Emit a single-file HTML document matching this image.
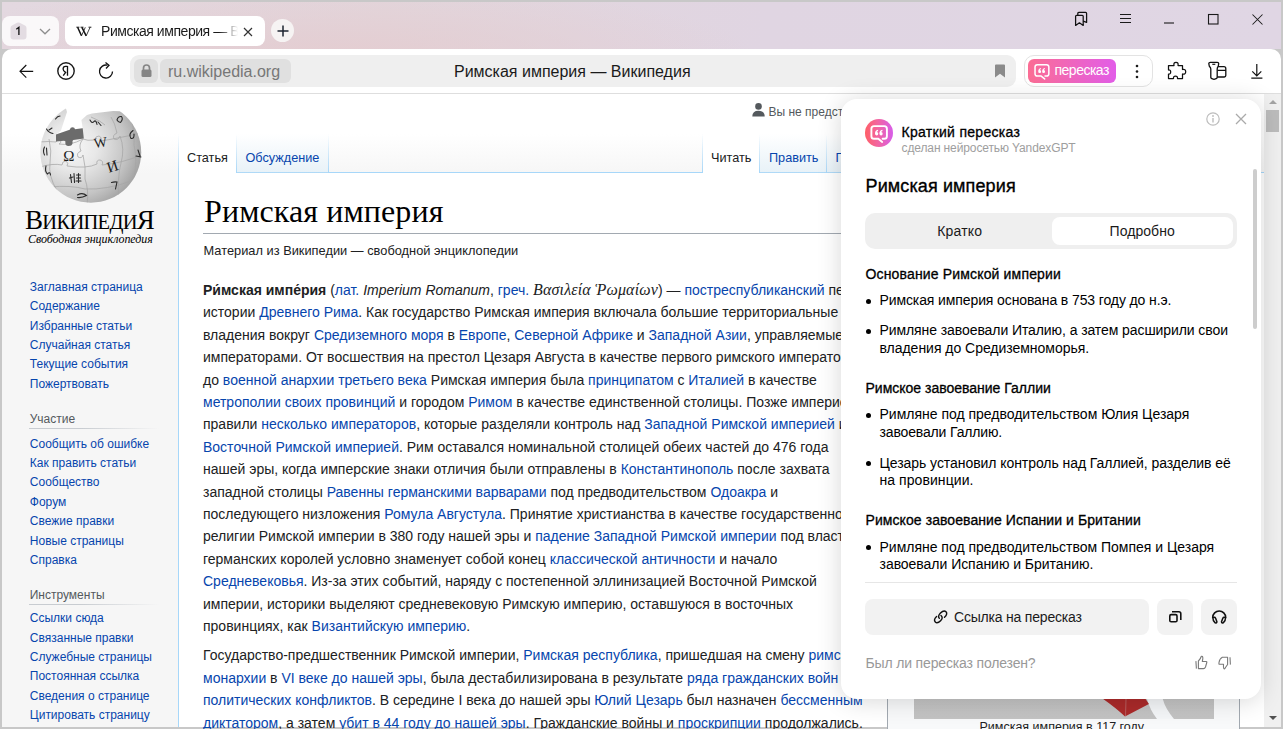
<!DOCTYPE html>
<html><head><meta charset="utf-8">
<style>
*{box-sizing:border-box;margin:0;padding:0}
html,body{width:1283px;height:729px;overflow:hidden}
body{background:#c8c8c8;font-family:"Liberation Sans",sans-serif;position:relative}
.a{position:absolute}
#tabbar{left:2px;top:2px;width:1279px;height:47px;background:radial-gradient(ellipse 420px 70px at 330px 52px,rgba(228,204,208,.9),rgba(228,204,208,0)),linear-gradient(90deg,#e3d8e0 0%,#e2d6dc 30%,#e0d5e2 60%,#e0d6e4 100%)}
#toolbar{left:2px;top:49px;width:1279px;height:45px;background:#fff;border-radius:10px 10px 0 0;border-bottom:1px solid #dedede}
#page{left:2px;top:94px;width:1262px;height:632px;background:#f6f6f6;overflow:hidden}
#vscroll{left:1264px;top:94px;width:16px;height:632px;background:#f0f0f0}
.ic{position:absolute;overflow:visible}

.t{position:absolute;white-space:nowrap}
a{color:#0645ad;text-decoration:none}
</style></head><body>
<!-- TAB BAR -->
<div id="tabbar" class="a"></div>
<div class="a" style="left:2px;top:16px;width:57px;height:30px;background:rgba(255,255,255,.82);border-radius:8px"></div>
<svg class="ic" style="left:9.5px;top:22px" width="17" height="18" viewBox="0 0 17 18"><path d="M7 0.8Q8.3 0.2 9.6 0.8L15 3.6Q16.5 4.4 16.5 6V14.5Q16.5 17.5 13.5 17.5H3.5Q0.5 17.5 0.5 14.5V6Q0.5 4.4 2 3.6Z" fill="#e3dce2"/><path d="M6.3 7.2L8.9 5.3V13" fill="none" stroke="#111" stroke-width="1.3"/></svg>
<svg class="ic" style="left:38.5px;top:28px" width="12" height="7" viewBox="0 0 12 7"><path d="M1 1L6 5.8L11 1" fill="none" stroke="#8e8e8e" stroke-width="1.3"/></svg>
<div class="a" style="left:65px;top:16px;width:200px;height:30px;background:#fff;border-radius:8px"></div>
<svg class="ic" style="left:76px;top:26px" width="16" height="11" viewBox="0 0 16 11"><path d="M1.6 1.3L5.5 9.8M5.9 1.3L10.2 9.8" stroke="#111" stroke-width="1.5"/><path d="M5.5 9.8L9.3 1.3M10.2 9.8L14.1 1.3" stroke="#111" stroke-width="0.8"/><path d="M0.3 1.2H3.4M4.5 1.2H7.5M12.5 1.2H15.4" stroke="#111" stroke-width="0.9"/></svg>
<div class="a" style="left:101px;top:22px;width:137px;overflow:hidden;white-space:nowrap;font-size:14px;line-height:18px;color:#1a1a1a;letter-spacing:-0.45px;-webkit-mask-image:linear-gradient(90deg,#000 86%,transparent 100%)">Римская империя — Википедия</div>
<svg class="ic" style="left:243px;top:27px" width="10" height="10" viewBox="0 0 10 10"><path d="M1 1L9 9M9 1L1 9" stroke="#333" stroke-width="1.2"/></svg>
<div class="a" style="left:271px;top:19px;width:23px;height:23px;border-radius:50%;background:#f6f3f3"></div>
<svg class="ic" style="left:276.5px;top:24.5px" width="12" height="12" viewBox="0 0 12 12"><path d="M6 0.5V11.5M0.5 6H11.5" stroke="#1d2430" stroke-width="1.5"/></svg>

<!-- window controls -->
<svg class="ic" style="left:1074px;top:11px" width="14" height="16" viewBox="0 0 14 16"><path d="M1.6 14.4V5.3Q1.6 4.3 2.6 4.3H8.2Q9.2 4.3 9.2 5.3V14.4L5.4 11.8Z" fill="none" stroke="#111" stroke-width="1.25" stroke-linejoin="round"/><path d="M3.8 4.3V2.4Q3.8 1.4 4.8 1.4H11.6Q12.6 1.4 12.6 2.4V11.4L9.2 10.2" fill="none" stroke="#111" stroke-width="1.25" stroke-linejoin="round"/></svg>
<svg class="ic" style="left:1120px;top:14px" width="11" height="10" viewBox="0 0 11 10"><path d="M0 0.5H11M0 4.5H11M0 8.5H11" stroke="#1a1a1a" stroke-width="1.1"/></svg>
<svg class="ic" style="left:1164px;top:22px" width="10" height="2" viewBox="0 0 10 2"><path d="M0 1H10" stroke="#1a1a1a" stroke-width="1.1"/></svg>
<svg class="ic" style="left:1208px;top:14px" width="11" height="11" viewBox="0 0 11 11"><rect x="0.5" y="0.5" width="9.5" height="9.5" fill="none" stroke="#1a1a1a" stroke-width="1.1"/></svg>
<svg class="ic" style="left:1252px;top:14px" width="11" height="11" viewBox="0 0 11 11"><path d="M0.5 0.5L10.5 10.5M10.5 0.5L0.5 10.5" stroke="#1a1a1a" stroke-width="1.05"/></svg>

<!-- TOOLBAR -->
<div id="toolbar" class="a"></div>
<svg class="ic" style="left:19px;top:64px" width="15" height="15" viewBox="0 0 15 15"><path d="M14.2 7.3H1.2M7.3 1L1 7.3L7.3 13.6" fill="none" stroke="#111" stroke-width="1.15"/></svg>
<svg class="ic" style="left:57px;top:62px" width="18" height="18" viewBox="0 0 18 18"><circle cx="9" cy="9" r="8.2" fill="none" stroke="#1a1a1a" stroke-width="1.4"/><path d="M10.5 4.1V13.8M10.5 4.3H8.5Q6.1 4.3 6.1 7Q6.1 9 8.6 10.4L6.2 13.6" fill="none" stroke="#111" stroke-width="1.3"/></svg>
<svg class="ic" style="left:97px;top:62px" width="18" height="18" viewBox="0 0 18 18"><path d="M15.5 9.5A6.5 6.5 0 1 1 10.5 3.2" fill="none" stroke="#111" stroke-width="1.3"/><path d="M8.5 0.5L12 3.3L9 6.5" fill="none" stroke="#111" stroke-width="1.3"/></svg>

<div class="a" style="left:130px;top:55px;width:886px;height:32px;background:#efefef;border-radius:9px"></div>
<div class="a" style="left:134px;top:59px;width:24px;height:24px;background:#e0e0e0;border-radius:6px"></div>
<svg class="ic" style="left:141px;top:64px" width="11" height="13" viewBox="0 0 11 13"><path d="M2.5 6V4A3 3 0 0 1 8.5 4V6" fill="none" stroke="#858585" stroke-width="1.7"/><rect x="0.5" y="5.5" width="10" height="7.5" rx="1.5" fill="#858585"/></svg>
<div class="a" style="left:160px;top:59px;width:131px;height:24px;background:#e0e0e0;border-radius:6px"></div>
<div class="a" style="left:168px;top:62px;font-size:16px;line-height:20px;color:#777">ru.wikipedia.org</div>
<div class="a" style="left:454px;top:62px;font-size:16px;line-height:20px;color:#1a1a1a">Римская империя — Википедия</div>
<svg class="ic" style="left:994px;top:64px" width="12" height="14" viewBox="0 0 12 14"><path d="M1 1.5Q1 0.5 2 0.5H10Q11 0.5 11 1.5V13.5L6 9.8L1 13.5Z" fill="#8a8a8a"/></svg>

<div class="a" style="left:1024px;top:55px;width:129px;height:32px;border:1px solid #e3e3e3;border-radius:10px"></div>
<div class="a" style="left:1028px;top:59px;width:88px;height:24px;border-radius:6px;background:linear-gradient(90deg,#fb6d94,#e25de8)"></div>
<svg class="ic" style="left:1032px;top:62.3px" width="19.6" height="19.6" viewBox="0 0 22 22"><path d="M10.3 15.8H6Q3.4 15.8 3.4 13.2V5.7Q3.4 3.1 6 3.1H16.3Q18.9 3.1 18.9 5.7V13.2Q18.9 15.8 16.3 15.8H14.6M10.3 15.8L14.2 19" fill="none" stroke="#fff" stroke-width="1.7" stroke-linecap="round" stroke-linejoin="round"/><path d="M7 10.6Q6.9 7.6 9.9 6.8L10.2 7.9Q8.9 8.4 8.7 9.1A1.65 1.65 0 1 1 7 10.6ZM11.4 10.6Q11.3 7.6 14.3 6.8L14.6 7.9Q13.3 8.4 13.1 9.1A1.65 1.65 0 1 1 11.4 10.6Z" fill="#fff"/></svg>
<div class="a" style="left:1054.5px;top:62px;font-size:14px;line-height:16px;color:#fff;letter-spacing:-0.5px">пересказ</div>
<svg class="ic" style="left:1135px;top:64px" width="4" height="15" viewBox="0 0 4 15"><circle cx="2" cy="2" r="1.3" fill="#1a1a1a"/><circle cx="2" cy="7.5" r="1.3" fill="#1a1a1a"/><circle cx="2" cy="13" r="1.3" fill="#1a1a1a"/></svg>
<svg class="ic" style="left:1167px;top:61px" width="20" height="19" viewBox="0 0 20 19"><path d="M1.5 4.5H7Q6.3 1.3 9 1.3Q11.7 1.3 11 4.5H15.5V8.5Q18.7 8 18.7 10.75Q18.7 13.5 15.5 13V17.5H10.5Q10.7 15 8.5 15Q6.3 15 6.5 17.5H1.5V13Q3.7 13.2 3.7 11Q3.7 8.8 1.5 9Z" fill="none" stroke="#111" stroke-width="1.25" stroke-linejoin="round"/></svg>
<svg class="ic" style="left:1207px;top:61px" width="20" height="20" viewBox="0 0 20 20"><path d="M1.8 2.6Q1.8 1.3 3.3 1.3H10.2Q11.7 1.3 11.7 2.6L11.3 5.2Q10.2 6.6 10.2 8V16.6Q10.2 17.8 7 18.3Q3.8 17.8 3.8 16.6V8Q3.8 6.6 2.3 5.2Z" fill="none" stroke="#111" stroke-width="1.3" stroke-linejoin="round"/><path d="M5.3 3.3H8.3" stroke="#111" stroke-width="1.2"/><path d="M11 5.6H16.9Q18.8 5.6 18.8 7.6V14.6Q18.8 16 17.3 16H10.2M10.5 9.3H18.8" fill="none" stroke="#111" stroke-width="1.3"/></svg>
<svg class="ic" style="left:1251px;top:63px" width="12" height="17" viewBox="0 0 12 17"><path d="M5.8 1V12.8M1.3 8.3L5.8 12.8L10.3 8.3M0.3 15.2H11.4" fill="none" stroke="#111" stroke-width="1.2"/></svg>

<div class="a" style="left:2px;top:94px;width:1262px;height:633px;background:#f6f6f6"></div>
<div class="a" style="left:2px;top:94px;width:1262px;height:80px;background:linear-gradient(#fff 50%,#f6f6f6 100%)"></div>
<div class="a" style="left:178px;top:172px;width:1086px;height:555px;background:#fff;border-left:1px solid #a7d7f9;border-top:1px solid #a7d7f9"></div>
<div class="a" style="left:179px;top:134px;width:57px;height:39px;background:#fff"></div>
<div class="a" style="left:237px;top:134px;width:91px;height:39px;background:linear-gradient(to top,#77c1f6 0,#e8f2f8 1px,#fff 100%)"></div>
<div class="a" style="left:703px;top:134px;width:56px;height:39px;background:#fff"></div>
<div class="a" style="left:760px;top:134px;width:66px;height:39px;background:linear-gradient(to top,#77c1f6 0,#e8f2f8 1px,#fff 100%)"></div>
<div class="a" style="left:827px;top:134px;width:93px;height:39px;background:linear-gradient(to top,#77c1f6 0,#e8f2f8 1px,#fff 100%)"></div>
<div class="a" style="left:178px;top:134px;width:1px;height:39px;background:linear-gradient(rgba(167,215,249,0),#a7d7f9)"></div>
<div class="a" style="left:236px;top:134px;width:1px;height:39px;background:linear-gradient(rgba(167,215,249,0),#a7d7f9)"></div>
<div class="a" style="left:328px;top:134px;width:1px;height:39px;background:linear-gradient(rgba(167,215,249,0),#a7d7f9)"></div>
<div class="a" style="left:702px;top:134px;width:1px;height:39px;background:linear-gradient(rgba(167,215,249,0),#a7d7f9)"></div>
<div class="a" style="left:759px;top:134px;width:1px;height:39px;background:linear-gradient(rgba(167,215,249,0),#a7d7f9)"></div>
<div class="a" style="left:826px;top:134px;width:1px;height:39px;background:linear-gradient(rgba(167,215,249,0),#a7d7f9)"></div>
<div class="a" style="left:920px;top:134px;width:1px;height:39px;background:linear-gradient(rgba(167,215,249,0),#a7d7f9)"></div>
<div class="t " style="left:187px;top:151px;font-size:12.7px;line-height:14px;color:#202122;">Статья</div>
<div class="t " style="left:245.5px;top:151px;font-size:12.7px;line-height:14px;color:#202122;"><a>Обсуждение</a></div>
<div class="t " style="left:711px;top:151px;font-size:12.7px;line-height:14px;color:#202122;">Читать</div>
<div class="t " style="left:769px;top:151px;font-size:12.7px;line-height:14px;color:#202122;"><a>Править</a></div>
<div class="t " style="left:835.5px;top:151px;font-size:12.7px;line-height:14px;color:#202122;"><a>Править код</a></div>
<svg class="ic" style="left:752px;top:103px" width="13" height="14" viewBox="0 0 13 14"><circle cx="6.5" cy="3.4" r="3.3" fill="#54595d"/><path d="M0.3 13.5Q0.3 7.8 6.5 7.8Q12.7 7.8 12.7 13.5Z" fill="#54595d"/></svg>
<div class="t " style="left:768.5px;top:105px;font-size:12px;line-height:14px;color:#54595d;">Вы не представились</div>
<div class="t " style="left:204px;top:193px;font-size:32px;line-height:36px;color:#000;font-family:'Liberation Serif',serif;letter-spacing:0.106px;">Римская империя</div>
<div class="a" style="left:203px;top:233px;width:1040px;height:1px;background:#a2a9b1"></div>
<div class="t " style="left:203.5px;top:243px;font-size:12.8px;line-height:15px;color:#202122;letter-spacing:0.015px;">Материал из Википедии — свободной энциклопедии</div>
<div class="t " style="left:203px;top:282px;font-size:14px;line-height:16px;color:#202122;"><b>Ри́мская импе́рия</b> (<a>лат.</a> <i>Imperium Romanum</i>, <a>греч.</a> <i style="font-family:'Liberation Serif',serif;font-size:16px;letter-spacing:0.15px">Βασιλεία Ῥωμαίων</i>) — <a>постреспубликанский</a> период</div>
<div class="t " style="left:203px;top:304px;font-size:14px;line-height:16px;color:#202122;">истории <a>Древнего Рима</a>. Как государство Римская империя включала большие территориальные</div>
<div class="t " style="left:203px;top:327px;font-size:14px;line-height:16px;color:#202122;">владения вокруг <a>Средиземного моря</a> в <a>Европе</a>, <a>Северной Африке</a> и <a>Западной Азии</a>, управляемые</div>
<div class="t " style="left:203px;top:349px;font-size:14px;line-height:16px;color:#202122;">императорами. От восшествия на престол Цезаря Августа в качестве первого римского императора</div>
<div class="t " style="left:203px;top:372px;font-size:14px;line-height:16px;color:#202122;">до <a>военной анархии третьего века</a> Римская империя была <a>принципатом</a> с <a>Италией</a> в качестве</div>
<div class="t " style="left:203px;top:394px;font-size:14px;line-height:16px;color:#202122;"><a>метрополии своих провинций</a> и городом <a>Римом</a> в качестве единственной столицы. Позже империей</div>
<div class="t " style="left:203px;top:416px;font-size:14px;line-height:16px;color:#202122;">правили <a>несколько императоров</a>, которые разделяли контроль над <a>Западной Римской империей</a> и</div>
<div class="t " style="left:203px;top:439px;font-size:14px;line-height:16px;color:#202122;"><a>Восточной Римской империей</a>. Рим оставался номинальной столицей обеих частей до 476 года</div>
<div class="t " style="left:203px;top:461px;font-size:14px;line-height:16px;color:#202122;">нашей эры, когда имперские знаки отличия были отправлены в <a>Константинополь</a> после захвата</div>
<div class="t " style="left:203px;top:484px;font-size:14px;line-height:16px;color:#202122;">западной столицы <a>Равенны</a> <a>германскими варварами</a> под предводительством <a>Одоакра</a> и</div>
<div class="t " style="left:203px;top:506px;font-size:14px;line-height:16px;color:#202122;">последующего низложения <a>Ромула Августула</a>. Принятие христианства в качестве государственной</div>
<div class="t " style="left:203px;top:528px;font-size:14px;line-height:16px;color:#202122;">религии Римской империи в 380 году нашей эры и <a>падение Западной Римской империи</a> под властью</div>
<div class="t " style="left:203px;top:551px;font-size:14px;line-height:16px;color:#202122;">германских королей условно знаменует собой конец <a>классической античности</a> и начало</div>
<div class="t " style="left:203px;top:573px;font-size:14px;line-height:16px;color:#202122;"><a>Средневековья</a>. Из-за этих событий, наряду с постепенной эллинизацией Восточной Римской</div>
<div class="t " style="left:203px;top:596px;font-size:14px;line-height:16px;color:#202122;">империи, историки выделяют средневековую Римскую империю, оставшуюся в восточных</div>
<div class="t " style="left:203px;top:618px;font-size:14px;line-height:16px;color:#202122;">провинциях, как <a>Византийскую империю</a>.</div>
<div class="t " style="left:203px;top:647px;font-size:14px;line-height:16px;color:#202122;">Государство-предшественник Римской империи, <a>Римская республика</a>, пришедшая на смену <a>римской</a></div>
<div class="t " style="left:203px;top:670px;font-size:14px;line-height:16px;color:#202122;"><a>монархии</a> в <a>VI веке до нашей эры</a>, была дестабилизирована в результате <a>ряда гражданских войн</a> и</div>
<div class="t " style="left:203px;top:692px;font-size:14px;line-height:16px;color:#202122;"><a>политических конфликтов</a>. В середине I века до нашей эры <a>Юлий Цезарь</a> был назначен <a>бессменным</a></div>
<div class="t " style="left:203px;top:715px;font-size:14px;line-height:16px;color:#202122;"><a>диктатором</a>, а затем <a>убит в 44 году до нашей эры</a>. Гражданские войны и <a>проскрипции</a> продолжались.</div>
<div class="a" style="left:887px;top:300px;width:353px;height:430px;background:#f8f9fa;border:1px solid #a2a9b1"></div>
<div class="a" style="left:914px;top:300px;width:300px;height:419px;background:linear-gradient(#b9b9b9,#c3c3c3)"></div>
<svg class="ic" style="left:1090px;top:690px" width="124" height="29" viewBox="0 0 124 29"><path d="M57 9L72.8 9Q75 18 84 29L67 29Q60 20 57 9Z" fill="#f4f6f8"/><path d="M13.2 9L55.6 9L58.9 13.9L35 26.5Q26 18 13.2 9Z" fill="#ab2a2a"/><path d="M36 9L35.5 26" stroke="#c08080" stroke-width="0.6"/></svg>
<div class="t " style="left:979.5px;top:720px;font-size:12.5px;line-height:14px;color:#202122;">Римская империя в 117 году</div>
<div class="t " style="left:29.8px;top:280px;font-size:12px;line-height:14px;color:#202122;"><a>Заглавная страница</a></div>
<div class="t " style="left:29.8px;top:299px;font-size:12px;line-height:14px;color:#202122;"><a>Содержание</a></div>
<div class="t " style="left:29.8px;top:319px;font-size:12px;line-height:14px;color:#202122;"><a>Избранные статьи</a></div>
<div class="t " style="left:29.8px;top:338px;font-size:12px;line-height:14px;color:#202122;"><a>Случайная статья</a></div>
<div class="t " style="left:29.8px;top:357px;font-size:12px;line-height:14px;color:#202122;"><a>Текущие события</a></div>
<div class="t " style="left:29.8px;top:377px;font-size:12px;line-height:14px;color:#202122;"><a>Пожертвовать</a></div>
<div class="t " style="left:29.8px;top:437px;font-size:12px;line-height:14px;color:#202122;"><a>Сообщить об ошибке</a></div>
<div class="t " style="left:29.8px;top:456px;font-size:12px;line-height:14px;color:#202122;"><a>Как править статьи</a></div>
<div class="t " style="left:29.8px;top:475px;font-size:12px;line-height:14px;color:#202122;"><a>Сообщество</a></div>
<div class="t " style="left:29.8px;top:495px;font-size:12px;line-height:14px;color:#202122;"><a>Форум</a></div>
<div class="t " style="left:29.8px;top:514px;font-size:12px;line-height:14px;color:#202122;"><a>Свежие правки</a></div>
<div class="t " style="left:29.8px;top:534px;font-size:12px;line-height:14px;color:#202122;"><a>Новые страницы</a></div>
<div class="t " style="left:29.8px;top:553px;font-size:12px;line-height:14px;color:#202122;"><a>Справка</a></div>
<div class="t " style="left:29.8px;top:611px;font-size:12px;line-height:14px;color:#202122;"><a>Ссылки сюда</a></div>
<div class="t " style="left:29.8px;top:631px;font-size:12px;line-height:14px;color:#202122;"><a>Связанные правки</a></div>
<div class="t " style="left:29.8px;top:650px;font-size:12px;line-height:14px;color:#202122;"><a>Служебные страницы</a></div>
<div class="t " style="left:29.8px;top:669px;font-size:12px;line-height:14px;color:#202122;"><a>Постоянная ссылка</a></div>
<div class="t " style="left:29.8px;top:689px;font-size:12px;line-height:14px;color:#202122;"><a>Сведения о странице</a></div>
<div class="t " style="left:29.8px;top:708px;font-size:12px;line-height:14px;color:#202122;"><a>Цитировать страницу</a></div>
<div class="t " style="left:29.7px;top:412px;font-size:12px;line-height:14px;color:#54595d;">Участие</div>
<div class="a" style="left:29px;top:428px;width:130px;height:1px;background:linear-gradient(90deg,#c8ccd1 0%,#c8ccd1 40%,rgba(200,204,209,0) 100%)"></div>
<div class="t " style="left:29.7px;top:588px;font-size:12px;line-height:14px;color:#54595d;">Инструменты</div>
<div class="a" style="left:29px;top:604px;width:130px;height:1px;background:linear-gradient(90deg,#c8ccd1 0%,#c8ccd1 40%,rgba(200,204,209,0) 100%)"></div>
<div class="t" style="left:25px;top:207px;font-family:'Liberation Serif',serif;color:#000;line-height:26px;font-size:27px;letter-spacing:-0.7px">В<span style="font-size:20.5px">ИКИПЕДИ</span>Я</div>
<div class="t " style="left:28px;top:232px;font-size:12px;line-height:14px;color:#000;font-family:'Liberation Serif',serif;font-style:italic;letter-spacing:-0.076px;">Свободная энциклопедия</div>
<svg class="ic" style="left:35px;top:105px" width="110" height="103" viewBox="0 0 110 103">
<defs>
<radialGradient id="gg" cx="0.34" cy="0.40" r="0.75">
<stop offset="0" stop-color="#f7f7f7"/>
<stop offset="0.3" stop-color="#e8e8e8"/>
<stop offset="0.65" stop-color="#c4c4c4"/>
<stop offset="0.9" stop-color="#9c9c9c"/>
<stop offset="1" stop-color="#8a8a8a"/>
</radialGradient>
<clipPath id="gc"><circle cx="55.8" cy="47.3" r="50.4"/></clipPath>
<clipPath id="gp"><path d="M0 103L0 0L30 0L32 7L25.8 26L21 29.5L34.7 24.7L47.7 23.3L46.4 15L52 10L57 8.5L78 6L92 6.5L110 8L110 103Z"/></clipPath>
</defs>
<g clip-path="url(#gp)"><g clip-path="url(#gc)">
<rect x="0" y="0" width="110" height="103" fill="url(#gg)"/>
<g fill="none" stroke="#a6a6a6" stroke-width="0.75">
<path d="M4 37Q14 36 21 37Q22 33 25 34Q27 38 24 39Q35 41 48 34Q52 36 60 35Q60 31 64 31Q68 33 65 36Q80 34 106 28"/>
<path d="M5 62Q18 58 27 60Q27 56 31 56Q34 58 32 61Q52 64 62 59Q61 55 65 55Q69 56 67 60Q88 58 106 50"/>
<path d="M48 34Q43 40 46 46Q41 48 43 52Q47 54 48 50Q51 62 50 74Q54 85 52 100"/>
<path d="M76 12Q80 18 82 28Q77 30 79 34Q83 36 85 31Q90 44 86 58Q82 72 84 100"/>
<path d="M96 14Q100 25 99 40Q103 55 98 80"/>
<path d="M14 34Q17 46 15 58Q13 70 22 86"/>
<path d="M14 82Q36 80 50 84Q72 85 96 76"/>
<path d="M56 12Q66 16 70 20"/>
</g>
</g></g>
<path d="M21 29.5L34.7 24.7Q35.5 22.3 37.5 22.3Q39.8 22.5 40 24.2L47.7 23.3L48.8 33.6L38.3 34.9Q37 35.5 37.6 37.5Q37.5 41 33.5 41Q30 40.8 30.4 37.8Q31 36 29 35.8L21 36.4Z" fill="#6b6b6b"/>
<g font-family="'Liberation Serif',serif" fill="#1e1e1e">
<text x="28.3" y="55.8" font-size="15">Ω</text>
<text x="58.8" y="42.3" font-size="14" transform="rotate(-8 65 38)">W</text>
<text x="71.5" y="66.5" font-size="15.5" transform="rotate(-18 77 60)">И</text>
</g>
<g fill="none" stroke="#2a2a2a" stroke-width="1.1" stroke-linecap="round">
<path d="M35.5 69.5L36.5 77.5M39 68.5L39.5 77.5M41.5 70L45.5 70M41.5 73L45.5 73M41 76L46 76M43.5 68.5L43.5 77.5M34.5 73L38 72"/>
<path d="M76.5 77.5Q79.5 76.5 82 77L80.5 84"/>
<path d="M55 15Q57 19 59 16.5Q61 14.5 62 19.5M63 17L66 20.5"/>
<path d="M82 15Q83 11 86.5 11.5Q88.5 14 85.5 17.5Q83 17 82 15Z"/>
<path d="M98 25.5Q93 29 96 33.5Q99.5 34 99 29"/>
<path d="M103 45L105 51M101 51L106 52"/>
<path d="M9.5 42Q7.5 46 9.5 50M11.5 43L12 50"/>
<path d="M11 61Q9.5 66 12.5 69Q15 66 15.5 70"/>
<path d="M42.5 90Q47.5 87 51.5 90.5Q47 93 42.5 92.5"/>
<path d="M11.5 24Q14 28 18 28.5M14 25L17 23"/>
<path d="M20.5 14Q22.5 11 25 11"/>
</g>
</svg>
<div class="a" style="left:1264px;top:94px;width:17px;height:633px;background:#f0f0f0"></div>
<div class="a" style="left:1266px;top:110px;width:13px;height:22px;background:#bcbcbc"></div>
<svg class="ic" style="left:1268.5px;top:100px" width="8" height="4" viewBox="0 0 8 4"><path d="M0 4L4 0L8 4Z" fill="#a3a3a3"/></svg>
<svg class="ic" style="left:1269px;top:716px" width="8" height="4" viewBox="0 0 8 4"><path d="M0 0L4 4L8 0Z" fill="#505050"/></svg>
<div class="a" style="left:841px;top:99px;width:420px;height:599.5px;background:#fff;border-radius:16px;box-shadow:0 2px 24px rgba(0,0,0,.16)"></div>
<div class="a" style="left:865px;top:119px;width:28px;height:28px;border-radius:50%;background:linear-gradient(90deg,#ff5f66 0%,#f265a0 45%,#d75de9 100%)"></div>
<svg class="ic" style="left:868px;top:123px" width="22" height="22" viewBox="0 0 22 22"><path d="M10.3 15.8H6Q3.4 15.8 3.4 13.2V5.7Q3.4 3.1 6 3.1H16.3Q18.9 3.1 18.9 5.7V13.2Q18.9 15.8 16.3 15.8H14.6M10.3 15.8L14.2 19" fill="none" stroke="#fff" stroke-width="1.9" stroke-linecap="round" stroke-linejoin="round"/><path d="M7 10.6Q6.9 7.6 9.9 6.8L10.2 7.9Q8.9 8.4 8.7 9.1A1.65 1.65 0 1 1 7 10.6ZM11.4 10.6Q11.3 7.6 14.3 6.8L14.6 7.9Q13.3 8.4 13.1 9.1A1.65 1.65 0 1 1 11.4 10.6Z" fill="#fff"/></svg>
<div class="t " style="left:901.5px;top:124px;font-size:14px;line-height:16px;color:#000;letter-spacing:0.299px;-webkit-text-stroke:0.3px #000;">Краткий пересказ</div>
<div class="t " style="left:901.5px;top:141px;font-size:12px;line-height:14px;color:#9e9e9e;letter-spacing:-0.115px;">сделан нейросетью YandexGPT</div>
<svg class="ic" style="left:1206px;top:112px" width="14" height="14" viewBox="0 0 14 14"><circle cx="7" cy="7" r="6.2" fill="none" stroke="#bdbdbd" stroke-width="1.2"/><circle cx="7" cy="4" r="0.9" fill="#bdbdbd"/><path d="M7 6V10.5" stroke="#bdbdbd" stroke-width="1.4"/></svg>
<svg class="ic" style="left:1235px;top:113px" width="12" height="12" viewBox="0 0 12 12"><path d="M1 1L11 11M11 1L1 11" stroke="#aaa" stroke-width="1.3"/></svg>
<div class="t " style="left:865.5px;top:176px;font-size:18px;line-height:20px;color:#000;letter-spacing:0.122px;-webkit-text-stroke:0.35px #000;">Римская империя</div>
<div class="a" style="left:865px;top:213px;width:372px;height:36px;background:#efefef;border-radius:10px"></div>
<div class="a" style="left:1052px;top:217px;width:181px;height:28px;background:#fff;border-radius:8px"></div>
<div class="t " style="left:937.3px;top:223px;font-size:14px;line-height:16px;color:#1a1a1a;letter-spacing:0.149px;">Кратко</div>
<div class="t " style="left:1109.6px;top:223px;font-size:14px;line-height:16px;color:#1a1a1a;letter-spacing:0.046px;">Подробно</div>
<div class="t " style="left:865.5px;top:266px;font-size:14px;line-height:16px;color:#000;letter-spacing:0.159px;-webkit-text-stroke:0.3px #000;">Основание Римской империи</div>
<div class="a" style="left:865.5px;top:298.5px;width:5px;height:5px;border-radius:50%;background:#000"></div>
<div class="t " style="left:879.5px;top:292px;font-size:14px;line-height:16px;color:#000;letter-spacing:-0.111px;">Римская империя основана в 753 году до н.э.</div>
<div class="a" style="left:865.5px;top:328.5px;width:5px;height:5px;border-radius:50%;background:#000"></div>
<div class="t " style="left:879.5px;top:322px;font-size:14px;line-height:16px;color:#000;letter-spacing:-0.084px;">Римляне завоевали Италию, а затем расширили свои</div>
<div class="t " style="left:879.5px;top:340px;font-size:14px;line-height:16px;color:#000;letter-spacing:-0.029px;">владения до Средиземноморья.</div>
<div class="t " style="left:865.5px;top:380px;font-size:14px;line-height:16px;color:#000;letter-spacing:-0.006px;-webkit-text-stroke:0.3px #000;">Римское завоевание Галлии</div>
<div class="a" style="left:865.5px;top:412.5px;width:5px;height:5px;border-radius:50%;background:#000"></div>
<div class="t " style="left:879.5px;top:406px;font-size:14px;line-height:16px;color:#000;letter-spacing:-0.007px;">Римляне под предводительством Юлия Цезаря</div>
<div class="t " style="left:879.5px;top:424px;font-size:14px;line-height:16px;color:#000;letter-spacing:-0.149px;">завоевали Галлию.</div>
<div class="a" style="left:865.5px;top:461.2px;width:5px;height:5px;border-radius:50%;background:#000"></div>
<div class="t " style="left:879.5px;top:455px;font-size:14px;line-height:16px;color:#000;letter-spacing:-0.059px;">Цезарь установил контроль над Галлией, разделив её</div>
<div class="t " style="left:879.5px;top:472px;font-size:14px;line-height:16px;color:#000;letter-spacing:0.069px;">на провинции.</div>
<div class="t " style="left:865.5px;top:512px;font-size:14px;line-height:16px;color:#000;letter-spacing:0.076px;-webkit-text-stroke:0.3px #000;">Римское завоевание Испании и Британии</div>
<div class="a" style="left:865.5px;top:545.1px;width:5px;height:5px;border-radius:50%;background:#000"></div>
<div class="t " style="left:879.5px;top:539px;font-size:14px;line-height:16px;color:#000;letter-spacing:-0.012px;">Римляне под предводительством Помпея и Цезаря</div>
<div class="t " style="left:879.5px;top:556px;font-size:14px;line-height:16px;color:#000;letter-spacing:-0.037px;">завоевали Испанию и Британию.</div>
<div class="a" style="left:1253px;top:169px;width:4px;height:160px;background:#cdcdcd;border-radius:2px"></div>
<div class="a" style="left:865px;top:582px;width:372px;height:1px;background:#e6e6e6"></div>
<div class="a" style="left:865px;top:599px;width:284px;height:36px;background:#f2f2f2;border-radius:8px"></div>
<div class="a" style="left:1157px;top:599px;width:36px;height:36px;background:#f2f2f2;border-radius:8px"></div>
<div class="a" style="left:1201px;top:599px;width:36px;height:36px;background:#f2f2f2;border-radius:8px"></div>
<svg class="ic" style="left:932px;top:609px" width="17" height="17" viewBox="0 0 17 17"><path d="M7.3 9.2C6 8 6.5 6 8.5 4C10.5 2 12.5 1.2 14 2.7C15.5 4.2 14.5 6.5 12.5 8.3M4.6 7.5C2.5 9.5 1.8 11.5 3.3 13C4.8 14.5 6.8 13.5 8.6 11.7C10.5 9.8 10.8 8 9 6.5" fill="none" stroke="#111" stroke-width="1.45" stroke-linecap="round"/></svg>
<div class="t " style="left:954px;top:609px;font-size:14px;line-height:16px;color:#1a1a1a;letter-spacing:-0.199px;">Ссылка на пересказ</div>
<svg class="ic" style="left:1166px;top:610px" width="18" height="16" viewBox="0 0 18 16"><rect x="3.8" y="4.6" width="7.2" height="7.2" rx="1.3" fill="none" stroke="#111" stroke-width="1.6"/><path d="M6 1.7H12.8Q14.8 1.7 14.8 3.7V10" fill="none" stroke="#111" stroke-width="1.6"/></svg>
<svg class="ic" style="left:1210px;top:608px" width="18" height="17" viewBox="0 0 18 17"><path d="M2.75 10.2V9.45A6.45 6.45 0 0 1 15.65 9.45V10.2" fill="none" stroke="#111" stroke-width="1.6"/><path d="M2.9 9.6Q2.7 12.8 5.2 14.9Q6.6 15.3 6.9 13.8L5.6 10.2Q5 8.8 2.9 9.6ZM15.5 9.6Q15.7 12.8 13.2 14.9Q11.8 15.3 11.5 13.8L12.8 10.2Q13.4 8.8 15.5 9.6Z" fill="none" stroke="#111" stroke-width="1.5" stroke-linejoin="round"/></svg>
<div class="t " style="left:865.5px;top:655px;font-size:14px;line-height:16px;color:#999;letter-spacing:-0.158px;">Был ли пересказ полезен?</div>
<svg class="ic" style="left:1194px;top:655px" width="15" height="16" viewBox="0 0 15 16"><path d="M1.9 6.1L2.4 13.6M4.4 6Q6.5 4 7 2Q7.5 0.8 8.5 1.5Q9.3 2.5 8.3 6.5H12.3Q13 6.5 12.8 7.5L11.5 12Q10.8 13.6 9.5 13.6H4.4Z" fill="none" stroke="#7a7a7a" stroke-width="1.1" stroke-linejoin="round"/></svg>
<svg class="ic" style="left:1217px;top:655px" width="16" height="16" viewBox="0 0 16 16"><path d="M13 2.2L13.4 9.6M5.3 2.2H10.6V9.5L8.5 12.5Q7.5 14.6 6.8 13.5Q6.3 12.5 6.5 9.3H2.3Q1.8 9.3 2 7.5Q2.6 3.5 5.3 2.2Z" fill="none" stroke="#7a7a7a" stroke-width="1.1" stroke-linejoin="round"/></svg>
</body></html>
